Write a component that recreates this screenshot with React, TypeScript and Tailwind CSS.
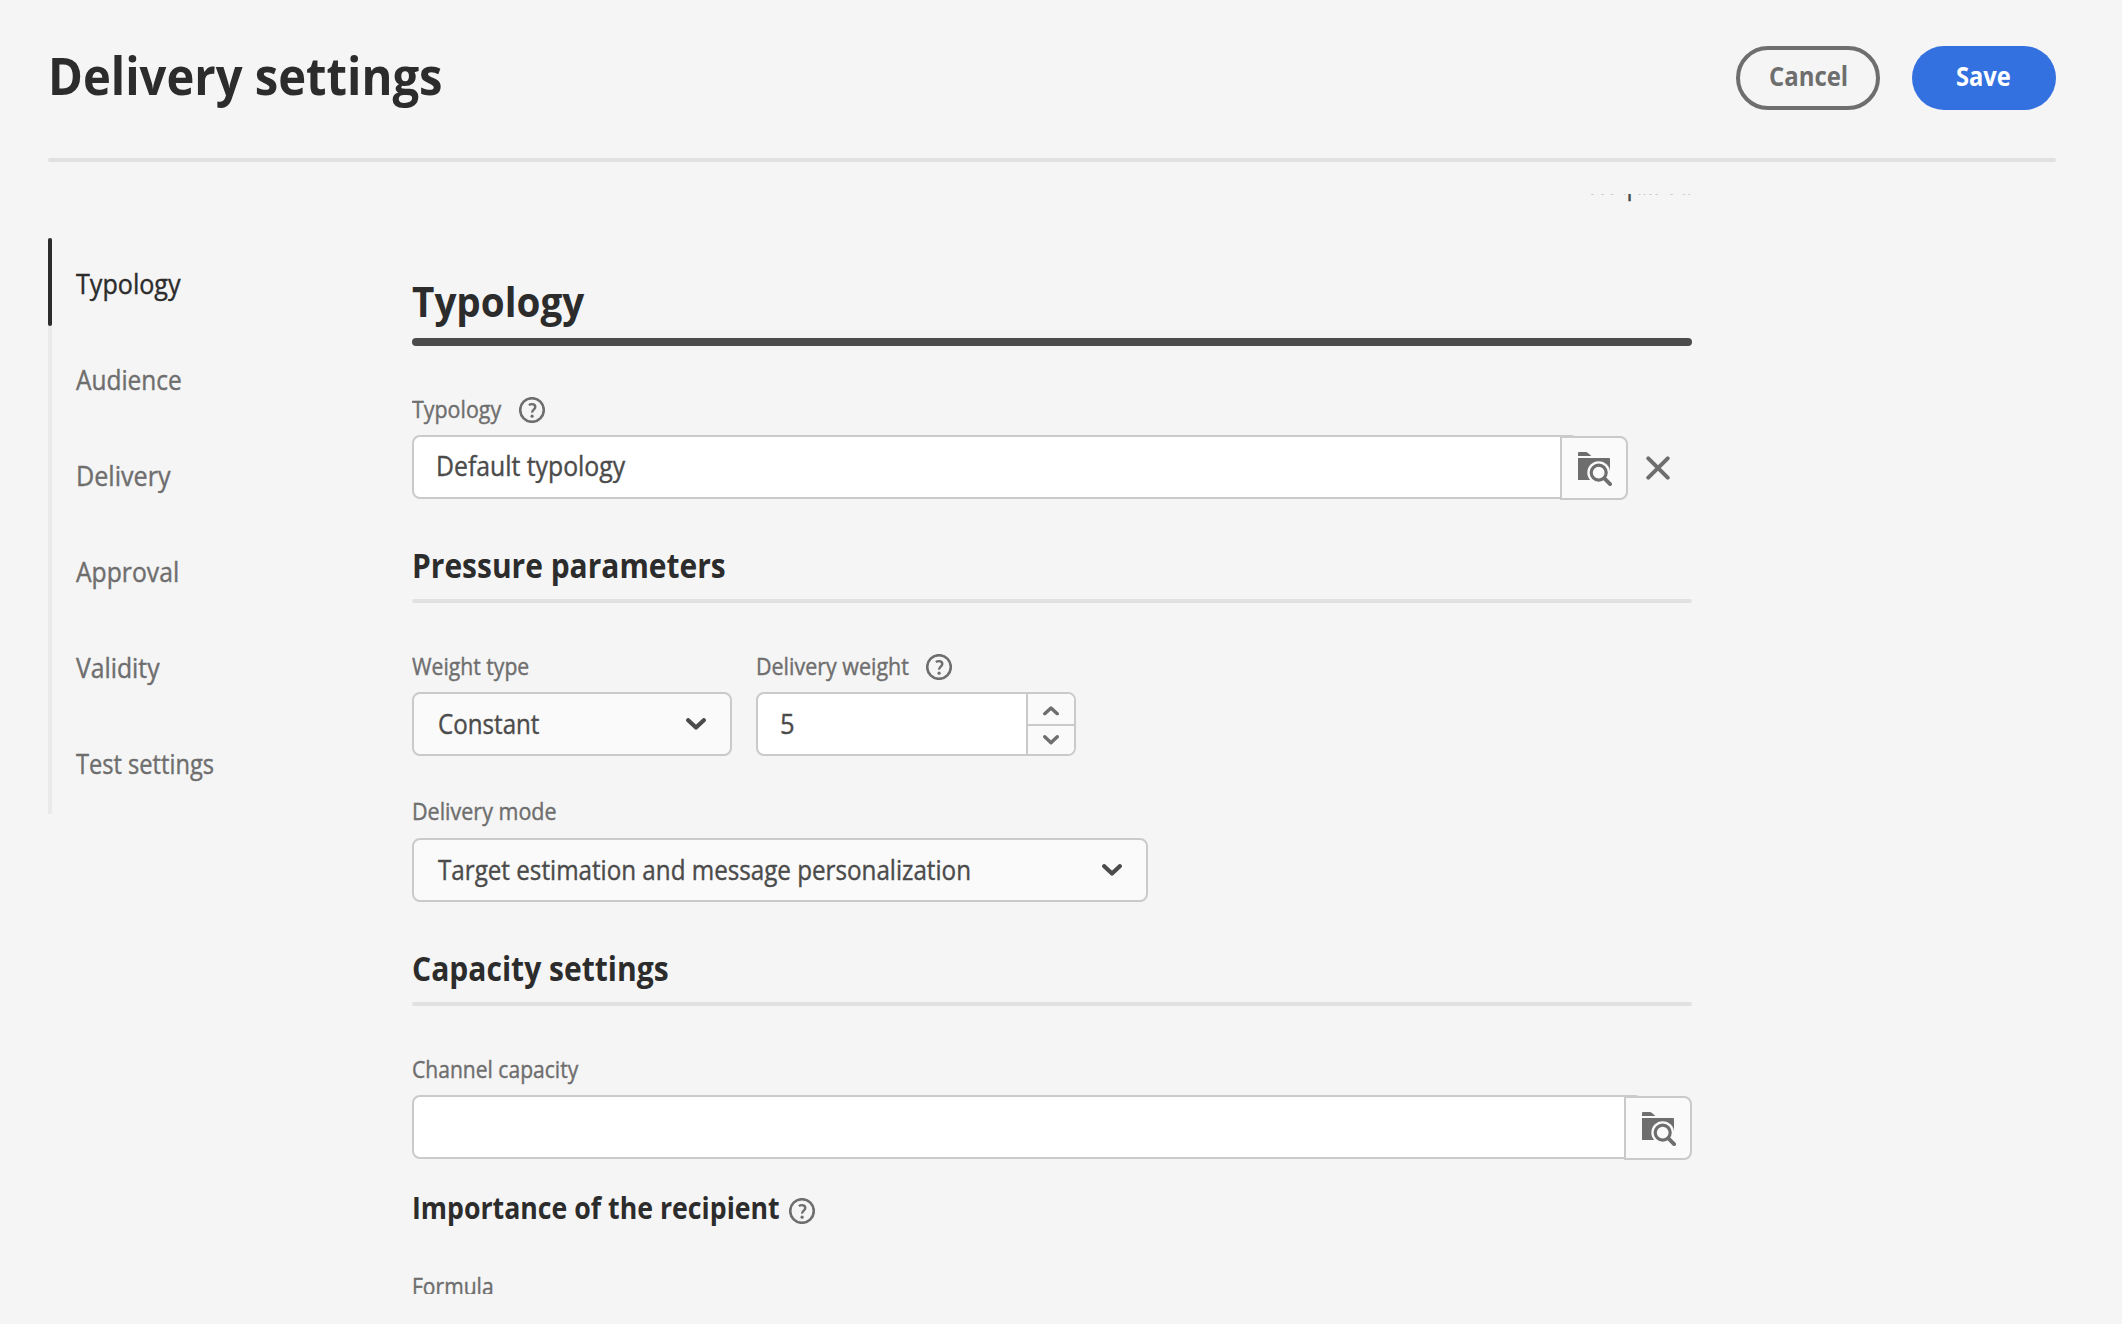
import type { ReactNode } from "react";
import { clsx } from "clsx";

type TxtProps = { className?: string; children: ReactNode };

function Txt({ className, children }: TxtProps) {
  return <span className={clsx("block origin-left whitespace-nowrap", className)}>{children}</span>;
}

function HelpIcon({ className }: { className?: string }) {
  return (
    <svg className={clsx("size-[26px] shrink-0", className)} viewBox="0 0 26 26" fill="none" stroke="#6e6e6e">
      <circle cx="13" cy="13" r="11.8" strokeWidth="2.6" />
      <path d="M9.9 8.1c.9-.7 1.9-1 3-1 2 0 3.4 1 3.4 2.9 0 2.6-3.3 2.8-3.2 5.6" strokeWidth="2.4" />
      <circle cx="13.1" cy="19.2" r="1.6" fill="#6e6e6e" stroke="none" />
    </svg>
  );
}

function Chevron({ className }: { className?: string }) {
  return (
    <svg className={clsx("shrink-0", className)} viewBox="0 0 20 12" fill="none" stroke="currentColor" strokeWidth="4.2" strokeLinecap="round" strokeLinejoin="round">
      <path d="M2.2 2.2 10 9.6l7.8-7.4" />
    </svg>
  );
}

function FolderSearchIcon() {
  return (
    <svg className="size-[34px]" viewBox="0 0 34 34">
      <path d="M0 1.2C0 .5.5 0 1.2 0h6.6c.7 0 1.4.3 1.9.7L13.4 4H0z" fill="#6e6e6e" />
      <path d="M0 6h31.2c.5 0 .8.3.8.8V28H0z" fill="#6e6e6e" />
      <circle cx="20.7" cy="20.6" r="11.4" fill="#fafafa" />
      <path d="M20 28h14v6H20zM28 20h6v10h-6z" fill="#fafafa" />
      <circle cx="20.7" cy="20.6" r="7.5" fill="none" stroke="#6e6e6e" strokeWidth="3.2" />
      <path d="m26.4 26.3 5.7 5.8" stroke="#6e6e6e" strokeWidth="3.8" strokeLinecap="round" />
    </svg>
  );
}

function PickerField({ inputClass, children }: { inputClass: string; children?: ReactNode }) {
  return (
    <div className="flex h-16">
      <div className={clsx("flex h-16 items-center rounded-lg border-2 border-[#cacaca] bg-white pb-0.5 pl-[22px]", inputClass)}>
        {children}
      </div>
      <button className="-ml-[19px] mt-px flex h-16 w-[68px] items-center justify-center rounded-r-lg border-2 border-[#cacaca] bg-[#fafafa] pl-px pt-0.5">
        <FolderSearchIcon />
      </button>
    </div>
  );
}

function Select({ className, children }: { className: string; children: ReactNode }) {
  return (
    <div className={clsx("flex h-16 items-center justify-between rounded-lg border-2 border-[#cacaca] bg-[#fafafa] pl-6 pr-6 text-[#4b4b4b]", className)}>
      {children}
      <Chevron className="h-3 w-5" />
    </div>
  );
}

function SectionTitle({ className, children }: TxtProps) {
  return (
    <>
      <h3 className="mt-[41px] h-[50px] text-[34px] font-bold leading-[50px] text-[#2c2c2c] [-webkit-text-stroke:0px]">
        <Txt className={className}>{children}</Txt>
      </h3>
      <div className="mt-[9px] h-1 rounded-sm bg-[#e1e1e1]" />
    </>
  );
}

const LABEL = "flex h-[30px] items-center text-[23px] leading-[30px] text-[#6e6e6e]";

const NAV = [
  { name: "Typology", fit: "scale-x-[0.93]" },
  { name: "Audience", fit: "scale-x-[0.905]" },
  { name: "Delivery", fit: "scale-x-[0.931]" },
  { name: "Approval", fit: "scale-x-[0.915]" },
  { name: "Validity", fit: "scale-x-[0.916]" },
  { name: "Test settings", fit: "scale-x-[0.875]" },
];

export default function App() {
  return (
    <div className="h-[1324px] w-full overflow-hidden bg-[#f5f5f5] pl-12 pr-[66px] font-['Open_Sans',sans-serif] [-webkit-text-stroke:0.4px]">
      <header className="flex h-[158px] items-start justify-between [-webkit-text-stroke:0px]">
        <h1 className="pt-[45px] text-[52px] font-bold leading-[60px] text-[#2c2c2c]">
          <Txt className="scale-x-[0.907]">Delivery settings</Txt>
        </h1>
        <div className="flex gap-8 pt-[46px] text-[26px] font-bold leading-9">
          <button className="h-16 w-36 rounded-full border-4 border-[#6e6e6e] pb-1 pl-[29px] text-left text-[#6e6e6e]">
            <Txt className="scale-x-[0.92]">Cancel</Txt>
          </button>
          <button className="h-16 w-36 rounded-full bg-[#3471e0] pb-1 pl-11 text-left text-white">
            <Txt className="scale-x-[0.91]">Save</Txt>
          </button>
        </div>
      </header>
      <div className="h-1 rounded-sm bg-[#e1e1e1]" />

      <div className="flex">
        <nav className="mt-[76px] flex h-[576px] w-[364px] shrink-0 flex-col gap-2 bg-linear-to-r from-[#eaeaea] from-[4px] to-transparent to-[4px]">
          {NAV.map((item, i) => (
            <div
              key={item.name}
              className={clsx("flex h-[88px] text-[27px] leading-[92px]", i === 0 ? "text-[#2c2c2c]" : "text-[#6e6e6e]")}
            >
              <div className={clsx("h-[88px] w-1 shrink-0 rounded-full", i === 0 && "bg-[#2c2c2c]")} />
              <Txt className={clsx("ml-6", item.fit)}>{item.name}</Txt>
            </div>
          ))}
        </nav>

        <main className="mt-8 h-[1100px] w-[1280px] overflow-hidden">
          <div className="-mt-7 flex h-9 justify-end text-[27px] leading-9 text-[#4b4b4b]">
            <Txt className="w-[103px] scale-x-90">Required</Txt>
          </div>

          <h2 className="mt-[69px] h-[60px] text-[42px] font-bold leading-[60px] text-[#2c2c2c] [-webkit-text-stroke:0px]">
            <Txt className="scale-x-[0.92]">Typology</Txt>
          </h2>
          <div className="mt-[7px] h-2 rounded-full bg-[#4b4b4b]" />

          <div className={clsx(LABEL, "mt-12")}>
            <Txt className="w-[107px] scale-x-[0.931]">Typology</Txt>
            <HelpIcon className="mt-0.5" />
          </div>
          <div className="mt-[11px] flex">
            <PickerField inputClass="w-[1167px]">
              <Txt className="scale-x-[0.918] text-[27px] leading-9 text-[#4b4b4b]">Default typology</Txt>
            </PickerField>
            <button className="ml-[18px] mt-[21px] size-6">
              <svg viewBox="0 0 24 24" fill="none" stroke="#6e6e6e" strokeWidth="4" strokeLinecap="round">
                <path d="m2.3 2.3 19.4 19.4M21.7 2.3 2.3 21.7" />
              </svg>
            </button>
          </div>

          <SectionTitle className="scale-x-[0.881]">Pressure parameters</SectionTitle>

          <div className="mt-12 flex gap-6">
            <div className="w-80">
              <div className={LABEL}>
                <Txt className="scale-x-[0.92]">Weight type</Txt>
              </div>
              <Select className="mt-[11px] w-80">
                <Txt className="scale-x-[0.894] text-[27px] leading-9">Constant</Txt>
              </Select>
            </div>
            <div className="w-80">
              <div className={LABEL}>
                <Txt className="w-[170px] scale-x-[0.933]">Delivery weight</Txt>
                <HelpIcon className="mt-0.5" />
              </div>
              <div className="mt-[11px] flex h-16 overflow-hidden rounded-lg border-2 border-[#cacaca] bg-white">
                <div className="flex flex-1 items-center pb-px pl-[22px] text-[27px] leading-9 text-[#4b4b4b]">
                  <Txt className="scale-x-[0.946]">5</Txt>
                </div>
                <div className="flex w-12 flex-col border-l-2 border-[#cacaca] bg-[#fafafa] text-[#6e6e6e]">
                  <div className="flex h-8 items-start justify-center border-b-2 border-[#cacaca] pt-3">
                    <Chevron className="h-[9.6px] w-4 rotate-180" />
                  </div>
                  <div className="flex flex-1 justify-center pt-[9px]">
                    <Chevron className="h-[9.6px] w-4" />
                  </div>
                </div>
              </div>
            </div>
          </div>

          <div className={clsx(LABEL, "mt-10")}>
            <Txt className="scale-x-[0.935]">Delivery mode</Txt>
          </div>
          <Select className="mt-3 w-[736px]">
            <Txt className="scale-x-[0.896] text-[27px] leading-9">Target estimation and message personalization</Txt>
          </Select>

          <SectionTitle className="scale-x-[0.884]">Capacity settings</SectionTitle>

          <div className={clsx(LABEL, "mt-12")}>
            <Txt className="scale-x-[0.916]">Channel capacity</Txt>
          </div>
          <div className="mt-[11px]">
            <PickerField inputClass="w-[1231px]" />
          </div>

          <div className="mt-[23px] flex h-[50px] items-center text-[30px] font-bold leading-[50px] text-[#2c2c2c] [-webkit-text-stroke:0px]">
            <Txt className="mt-0.5 w-[377px] scale-x-[0.89]">Importance of the recipient</Txt>
            <HelpIcon className="mt-2" />
          </div>
          <div className={clsx(LABEL, "mt-[39px]")}>
            <Txt className="scale-x-[0.916]">Formula</Txt>
          </div>
        </main>
      </div>
    </div>
  );
}
